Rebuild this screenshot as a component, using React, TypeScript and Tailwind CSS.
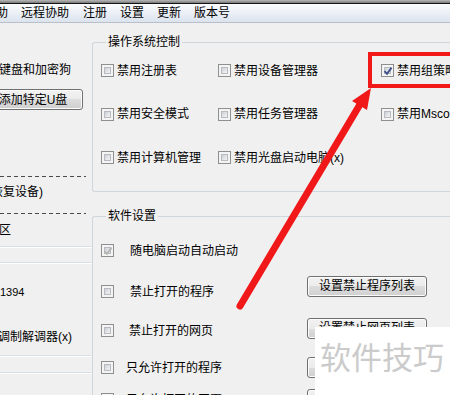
import React from "react";

const font = "font-['Liberation_Sans','Noto_Sans_CJK_SC',sans-serif]";

function Check({ checked = false, disabled = false }: { checked?: boolean; disabled?: boolean }) {
  return (
    <div className="relative h-[13px] w-[13px] shrink-0 border border-[#8e8f8f] bg-[#f4f4f4] p-[2px]">
      <div className="h-full w-full border border-[#b8bcc2] bg-gradient-to-br from-[#cdd1d6] to-[#f4f4f5]" />
      {checked && (
        <svg className="absolute left-[1px] top-[1px]" width="10" height="10" viewBox="0 0 10 10">
          <path
            d="M1.5 5.2 L4 7.8 L8.6 1.6"
            fill="none"
            stroke={disabled ? "#b4b4b4" : "#3b4f88"}
            strokeWidth="1.8"
          />
        </svg>
      )}
    </div>
  );
}

function Opt({ label, checked }: { label: string; checked?: boolean }) {
  return (
    <div className="flex h-full items-center gap-[3px] whitespace-nowrap">
      <Check checked={checked} />
      <span>{label}</span>
    </div>
  );
}

function WinButton({ children, className = "" }: { children: React.ReactNode; className?: string }) {
  return (
    <div
      className={`flex h-[21px] items-center justify-center rounded-[3px] border border-[#707070] bg-[linear-gradient(#f2f2f2_0%,#ebebeb_50%,#dddddd_50%,#cfcfcf_100%)] whitespace-nowrap shadow-[inset_0_0_0_1px_#fcfcfc] ${className}`}
    >
      {children}
    </div>
  );
}

const dashed = "h-[1px] w-[86px] bg-[repeating-linear-gradient(90deg,#4a4a4a_0_4px,transparent_4px_7px)]";
const etched = "h-[2px] w-[91px] border-t border-[#d5dfe5] border-b border-b-white";

export default function App() {
  return (
    <div className={`relative h-[395px] w-[450px] overflow-hidden bg-[#f0f0f0] text-[12px] leading-[16px] text-black ${font}`}>
      {/* title edge */}
      <div className="h-[3px] bg-gradient-to-b from-[#b8b8b8] to-[#7a7a7a]" />
      <div className="h-[1px] bg-[#141414]" />

      {/* menu bar */}
      <div className="flex h-[19px] items-center border-b border-[#b9c0ca] bg-gradient-to-b from-[#fbfcfe] to-[#dbe3ee]">
        <span className="ml-[-4px]">助</span>
        <span className="ml-[13px]">远程协助</span>
        <span className="ml-[14px]">注册</span>
        <span className="ml-[13px]">设置</span>
        <span className="ml-[13px]">更新</span>
        <span className="ml-[13px]">版本号</span>
      </div>

      <div className="flex">
        {/* left column */}
        <div className="flex w-[92px] shrink-0 flex-col whitespace-nowrap">
          <div className="mt-[39px] h-[16px] ml-[-1px]">键盘和加密狗</div>
          <WinButton className="ml-[-17px] mt-[11px] w-[100px]">添加特定U盘</WinButton>
          <div className={`mt-[66px] ${dashed}`} />
          <div className="mt-[7px] h-[16px] ml-[-9px]">恢复设备)</div>
          <div className={`mt-[13px] ${dashed}`} />
          <div className="mt-[8px] h-[16px] ml-[-1px]">区</div>
          <div className={`mt-[8px] ${etched}`} />
          <div className={`mt-[14px] ${etched}`} />
          <div className="mt-[20px] h-[16px] text-[11px]">1394</div>
          <div className="mt-[29px] h-[16px] ml-[-2px]">调制解调器(x)</div>
          <div className={`mt-[10px] ${etched}`} />
          <div className={`mt-[15px] ${etched}`} />
        </div>

        {/* right column */}
        <div className="flex flex-1 flex-col">
          <fieldset className="mt-[13px] rounded-[3px] border border-r-0 border-[#cfd7dd] pb-[11px] pl-[8px]">
            <legend className="ml-[5px] px-[2px] leading-[13px]">操作系统控制</legend>
            <div className="grid grid-cols-[117px_163px_1fr] grid-rows-[43.5px_43.5px_43.5px]">
              <Opt label="禁用注册表" />
              <Opt label="禁用设备管理器" />
              <Opt label="禁用组策略" checked />
              <Opt label="禁用安全模式" />
              <Opt label="禁用任务管理器" />
              <Opt label="禁用Msconfig" />
              <Opt label="禁用计算机管理" />
              <Opt label="禁用光盘启动电脑(x)" />
              <div />
            </div>
          </fieldset>

          <fieldset className="mt-[18px] h-[200px] rounded-[3px] border border-r-0 border-[#cfd7dd] pl-[8px]">
            <legend className="ml-[5px] px-[2px] leading-[13px]">软件设置</legend>
            <div className="flex">
              <div className="flex w-[206px] shrink-0 flex-col whitespace-nowrap">
                <div className="mt-[20px] flex h-[16px] items-center">
                  <Check checked disabled />
                  <span className="ml-[16px]">随电脑启动自动启动</span>
                </div>
                <div className="mt-[25px] flex h-[16px] items-center">
                  <Check />
                  <span className="ml-[16px]">禁止打开的程序</span>
                </div>
                <div className="mt-[23px] flex h-[16px] items-center">
                  <Check />
                  <span className="ml-[15px]">禁止打开的网页</span>
                </div>
                <div className="mt-[21px] flex h-[16px] items-center">
                  <Check />
                  <span className="ml-[12px]">只允许打开的程序</span>
                </div>
                <div className="mt-[16px] flex h-[16px] items-center">
                  <Check />
                  <span className="ml-[12px]">只允许打开的网页</span>
                </div>
              </div>
              <div className="flex w-[120px] flex-col">
                <WinButton className="mt-[53px]">设置禁止程序列表</WinButton>
                <WinButton className="mt-[21px]">设置禁止网页列表</WinButton>
                <WinButton className="mt-[18px]">设置允许程序列表</WinButton>
                <WinButton className="mt-[11px]">设置允许网页列表</WinButton>
              </div>
            </div>
          </fieldset>
        </div>
      </div>

      {/* annotation overlay */}
      <svg className="pointer-events-none absolute left-0 top-0" width="450" height="395" viewBox="0 0 450 395">
        <rect x="370" y="54" width="100" height="32" fill="none" stroke="#f01818" strokeWidth="4" />
        <line x1="240" y1="306" x2="362" y2="101" stroke="#f01818" strokeWidth="7" strokeLinecap="round" />
        <polygon points="371,88 367,110 352,101" fill="#f01818" />
      </svg>

      {/* watermark */}
      <div className="absolute left-[315px] top-[327px] h-[68px] w-[135px] bg-white pl-[5px] pt-[11px] text-[31px] leading-[36px] text-[#cbcbcb] font-['Noto_Sans_CJK_SC',sans-serif]">
        软件技巧
      </div>
    </div>
  );
}
